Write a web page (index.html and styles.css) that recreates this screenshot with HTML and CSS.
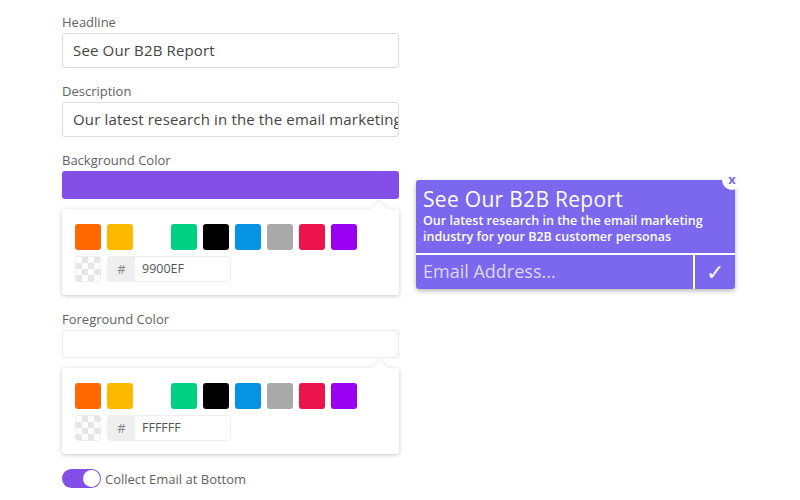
FILE: index.html
```html
<!DOCTYPE html>
<html lang="en">
<head>
  <meta charset="UTF-8">
  <title>Popup settings</title>
  <link rel="stylesheet" href="styles.css">
</head>
<body>
  <div class="page">
    <div class="settings">
      <label class="lbl">Headline</label>
      <div class="field">See Our B2B Report</div>

      <label class="lbl">Description</label>
      <div class="field">Our latest research in the the email marketing industry for your B2B customer personas</div>

      <label class="lbl">Background Color</label>
      <div class="color-bar purple"></div>
      <div class="picker">
        <div class="swatches">
          <span class="sw" style="background:#ff6900"></span>
          <span class="sw" style="background:#fcb900"></span>
          <span class="sw" style="background:#ffffff"></span>
          <span class="sw" style="background:#00d084"></span>
          <span class="sw" style="background:#000000"></span>
          <span class="sw" style="background:#0693e3"></span>
          <span class="sw" style="background:#a9a9a9"></span>
          <span class="sw" style="background:#eb144c"></span>
          <span class="sw" style="background:#9900ef"></span>
        </div>
        <div class="hex-row">
          <span class="sw checker"></span>
          <div class="hex"><span class="hash">#</span><span class="hex-val">9900EF</span></div>
        </div>
      </div>

      <label class="lbl">Foreground Color</label>
      <div class="color-bar white"></div>
      <div class="picker">
        <div class="swatches">
          <span class="sw" style="background:#ff6900"></span>
          <span class="sw" style="background:#fcb900"></span>
          <span class="sw" style="background:#ffffff"></span>
          <span class="sw" style="background:#00d084"></span>
          <span class="sw" style="background:#000000"></span>
          <span class="sw" style="background:#0693e3"></span>
          <span class="sw" style="background:#a9a9a9"></span>
          <span class="sw" style="background:#eb144c"></span>
          <span class="sw" style="background:#9900ef"></span>
        </div>
        <div class="hex-row">
          <span class="sw checker"></span>
          <div class="hex"><span class="hash">#</span><span class="hex-val">FFFFFF</span></div>
        </div>
      </div>

      <div class="toggle-row">
        <span class="toggle"><span class="knob"></span></span>
        <span class="toggle-label">Collect Email at Bottom</span>
      </div>
    </div>

    <div class="preview">
      <div class="popup">
        <span class="close">x</span>
        <div class="popup-head">
          <div class="popup-title">See Our B2B Report</div>
          <div class="popup-desc">Our latest research in the the email marketing industry for your B2B customer personas</div>
        </div>
        <div class="popup-form">
          <div class="popup-email">Email Address...</div>
          <div class="popup-btn">&#10003;</div>
        </div>
      </div>
    </div>
  </div>
</body>
</html>
```

FILE: styles.css
```css
body {
  margin: 0;
  background: #fff;
  font-family: "Open Sans", "Liberation Sans", sans-serif;
  color: #555;
}

.page {
  display: flex;
  align-items: flex-start;
  padding: 13px 0 0 62px;
}

.settings {
  width: 337px;
  flex-shrink: 0;
}

.lbl {
  display: block;
  font-size: 13px;
  line-height: 18px;
  color: #626262;
  margin-bottom: 2px;
}

.field {
  box-sizing: border-box;
  height: 35px;
  border: 1px solid #dcdcdc;
  border-radius: 3px;
  padding: 0 10px;
  font-size: 15px;
  letter-spacing: 0.15px;
  line-height: 33px;
  color: #444;
  white-space: nowrap;
  overflow: hidden;
  margin-bottom: 14px;
}

.color-bar {
  height: 28px;
  box-sizing: border-box;
  border-radius: 3px;
  margin-top: 2px;
}

.color-bar.purple {
  background: #844fe6;
}

.color-bar.white {
  background: #fff;
  border: 1px solid #ececec;
}

/* colour picker popover */
.picker {
  position: relative;
  margin-top: 10px;
  background: #fff;
  border-radius: 3px;
  box-shadow: 0 1px 4px rgba(0, 0, 0, 0.22);
  padding: 15px 13px 13px;
  margin-bottom: 15px;
}

.picker::before {
  content: "";
  position: absolute;
  top: -6px;
  right: 14px;
  width: 11px;
  height: 11px;
  background: #fff;
  transform: rotate(45deg);
  box-shadow: -1px -1px 1px rgba(0, 0, 0, 0.08);
}

.swatches,
.hex-row {
  display: flex;
  gap: 6px;
}

.hex-row {
  margin-top: 6px;
}

.sw {
  display: block;
  width: 26px;
  height: 26px;
  border-radius: 3px;
  box-sizing: border-box;
}

.checker {
  border: 1px solid #eee;
  background-color: #fff;
  background-image: conic-gradient(#e6e6e6 25%, #fff 0 50%, #e6e6e6 0 75%, #fff 0);
  background-size: 12px 12px;
}

.hex {
  display: flex;
  width: 124px;
  height: 26px;
  box-sizing: border-box;
  border: 1px solid #efefef;
  border-radius: 3px;
  overflow: hidden;
}

.hash {
  width: 27px;
  background: #efefef;
  color: #888;
  font-size: 13px;
  line-height: 24px;
  text-align: center;
}

.hex-val {
  padding-left: 7px;
  font-size: 12.5px;
  line-height: 24px;
  color: #555;
}

/* toggle */
.toggle-row {
  display: flex;
  align-items: center;
  gap: 4px;
  margin-top: 14px;
}

.toggle {
  position: relative;
  display: block;
  width: 39px;
  height: 19px;
  border-radius: 10px;
  background: #844fe6;
}

.knob {
  position: absolute;
  top: 1px;
  right: 1px;
  width: 17px;
  height: 17px;
  border-radius: 50%;
  background: #fff;
}

.toggle-label {
  font-size: 13px;
  color: #626262;
}

/* live preview */
.preview {
  margin: 167px 0 0 17px;
}

.popup {
  position: relative;
  width: 319px;
  background: #7b68ee;
  border-radius: 3px;
  box-shadow: 0 2px 5px rgba(0, 0, 0, 0.28);
  color: #fff;
}

.close {
  position: absolute;
  top: -10px;
  right: -7px;
  width: 20px;
  height: 20px;
  border-radius: 50%;
  background: #fff;
  color: #7b68ee;
  font-size: 13px;
  font-weight: bold;
  line-height: 18px;
  text-align: center;
}

.popup-head {
  padding: 6px 7px 8px;
  border-bottom: 2px solid #fff;
}

.popup-title {
  font-size: 21px;
  letter-spacing: 0.3px;
  line-height: 27px;
}

.popup-desc {
  font-size: 12.5px;
  line-height: 16px;
  font-weight: 600;
}

.popup-form {
  display: flex;
  height: 34px;
}

.popup-email {
  flex: 1;
  padding-left: 7px;
  font-size: 18px;
  line-height: 32px;
  color: #ded8ff;
  border-right: 2px solid #fff;
}

.popup-btn {
  width: 40px;
  text-align: center;
  font-size: 22px;
  line-height: 32px;
}
```
